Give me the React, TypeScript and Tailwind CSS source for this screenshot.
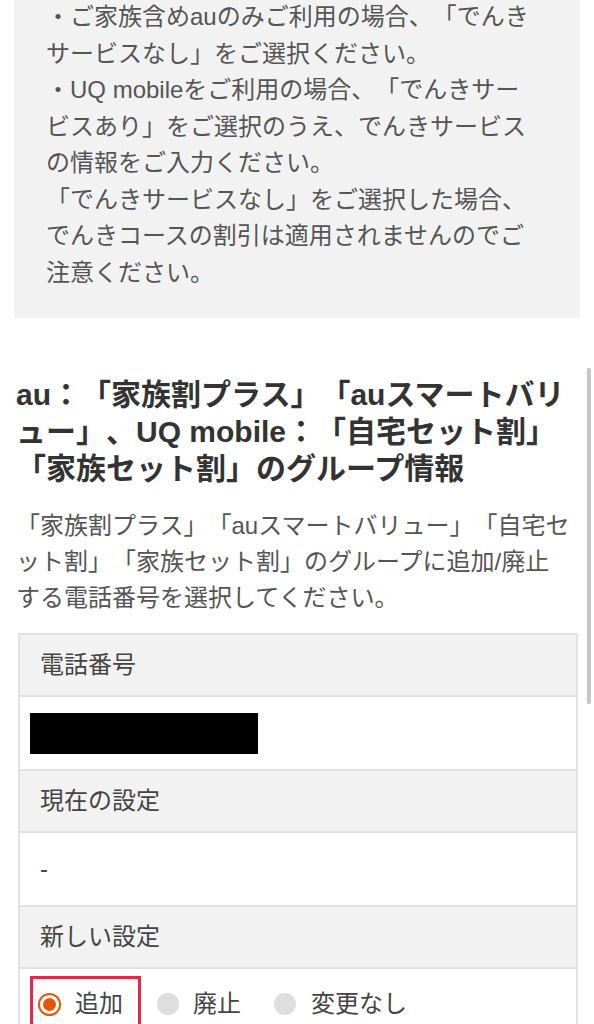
import React from "react";

const noticeLines = [
  "・ご家族含めauのみご利用の場合、「でんき",
  "サービスなし」をご選択ください。",
  "・UQ mobileをご利用の場合、「でんきサー",
  "ビスあり」をご選択のうえ、でんきサービス",
  "の情報をご入力ください。",
  "「でんきサービスなし」をご選択した場合、",
  "でんきコースの割引は適用されませんのでご",
  "注意ください。",
];

const headingLines = [
  "au：「家族割プラス」「auスマートバリ",
  "ュー」、UQ mobile：「自宅セット割」",
  "「家族セット割」のグループ情報",
];

const descLines = [
  "「家族割プラス」「auスマートバリュー」「自宅セ",
  "ット割」「家族セット割」のグループに追加/廃止",
  "する電話番号を選択してください。",
];

const HeaderRow = ({ label }: { label: string }) => (
  <div className="h-[62px] flex items-center px-[20px] bg-[#f2f2f2] border-b-2 border-[#e2e2e2] text-[24px] text-[#444]">
    {label}
  </div>
);

export default function App() {
  return (
    <div className="relative w-[594px] min-h-[1024px] bg-white overflow-hidden [text-spacing-trim:space-all] font-['Liberation_Sans','Noto_Sans_CJK_JP',sans-serif]">
      {/* notice box */}
      <div className="mx-[14px] bg-[#f2f2f2] pl-[32px] pb-[27px]">
        <div className="-mt-[1px] text-[24px] leading-[36.5px] text-[#555]">
          {noticeLines.map((l, i) => (
            <div key={i} className="whitespace-nowrap">
              {l}
            </div>
          ))}
        </div>
      </div>

      {/* group section */}
      <div className="px-[16px] mt-[58px]">
        <h2 className="text-[30px] font-bold leading-[37px] text-[#333]">
          {headingLines.map((l, i) => (
            <div key={i} className="whitespace-nowrap">
              {l}
            </div>
          ))}
        </h2>
        <p className="mt-[21px] text-[24px] leading-[36px] text-[#555]">
          {descLines.map((l, i) => (
            <span key={i} className="block whitespace-nowrap">
              {l}
            </span>
          ))}
        </p>
      </div>

      {/* table */}
      <div className="mt-[17px] ml-[18px] w-[560px] border-2 border-b-0 border-[#e2e2e2]">
        <HeaderRow label="電話番号" />
        <div className="h-[74px] flex items-center px-[10px] border-b-2 border-[#e2e2e2]">
          <div className="w-[228px] h-[41px] bg-black" />
        </div>
        <HeaderRow label="現在の設定" />
        <div className="h-[74px] flex items-center px-[20px] border-b-2 border-[#e2e2e2] text-[24px] text-[#444]">
          -
        </div>
        <HeaderRow label="新しい設定" />
        <div className="h-[70px] flex items-start pt-[7px] pl-[10px] text-[24px] text-[#444]">
          <div className="flex items-center h-[56px] border-[3px] border-[#e32a45] pl-[5px] pr-[15px]">
            <span className="w-[23px] h-[23px] rounded-full border-2 border-[#e8550a] flex items-center justify-center">
              <span className="w-[13px] h-[13px] rounded-full bg-[#e8550a]" />
            </span>
            <span className="ml-[14px]">追加</span>
          </div>
          <div className="flex items-center h-[56px] ml-[16px]">
            <span className="w-[22px] h-[22px] rounded-full bg-[#dedede]" />
            <span className="ml-[14px]">廃止</span>
          </div>
          <div className="flex items-center h-[56px] ml-[33px]">
            <span className="w-[22px] h-[22px] rounded-full bg-[#dedede]" />
            <span className="ml-[15px]">変更なし</span>
          </div>
        </div>
      </div>

      {/* scroll indicator */}
      <div className="absolute left-[587px] top-[368px] w-[4px] h-[336px] rounded-full bg-[#c6c6c6]" />
    </div>
  );
}
